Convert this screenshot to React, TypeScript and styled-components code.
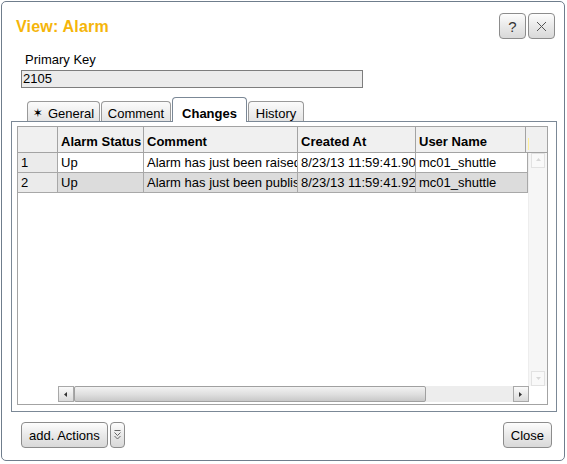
import React from "react";
import styled, { createGlobalStyle, css } from "styled-components";

const Global = createGlobalStyle`
  html, body { margin: 0; padding: 0; background: #fff; }
  body {
    font-family: "Liberation Sans", Arial, Helvetica, sans-serif;
    font-size: 13px;
    color: #000;
  }
`;

const Dialog = styled.div`
  margin: 1px;
  width: 564px;
  height: 460px;
  box-sizing: border-box;
  border: 1px solid #6f7d8c;
  border-radius: 5px;
  background: #fff;
  display: flex;
  flex-direction: column;
`;

const TitleBar = styled.div`
  display: flex;
  align-items: center;
  justify-content: space-between;
  height: 26px;
  padding: 11px 9px 0 14px;
`;

const Title = styled.div`
  font-size: 16px;
  font-weight: bold;
  color: #f5b50a;
  line-height: 18px;
  padding-top: 1px;
  letter-spacing: 0.2px;
`;

const TitleButtons = styled.div`
  display: flex;
  gap: 2px;
`;

const buttonSkin = css`
  box-sizing: border-box;
  height: 26px;
  border: 1px solid #8c8c8c;
  border-radius: 4px;
  background: linear-gradient(#fdfdfd, #e9e9e9 50%, #d9d9d9);
  font-family: inherit;
  font-size: 13px;
  color: #000;
  display: flex;
  align-items: center;
  justify-content: center;
  padding: 0;
`;

const IconButton = styled.div`
  ${buttonSkin};
  width: 27px;
  font-size: 15px;
  color: #333;
`;

const Field = styled.div`
  margin-top: 13px;
  padding-left: 19px;
  display: flex;
  flex-direction: column;
`;

const FieldLabel = styled.div`
  padding-left: 4px;
  line-height: 15px;
`;

const FieldValue = styled.div`
  margin-top: 3px;
  width: 342px;
  height: 18px;
  box-sizing: border-box;
  border: 1px solid #7d7d7d;
  background: #ebebeb;
  padding-left: 1px;
  line-height: 16px;
`;

const TabRow = styled.div`
  margin-top: 9px;
  height: 24px;
  padding-left: 25px;
  display: flex;
  align-items: flex-end;
  gap: 1px;
  position: relative;
  z-index: 1;
`;

const Tab = styled.div<{ $active?: boolean; $w: number }>`
  width: ${(p) => p.$w}px;
  box-sizing: border-box;
  border: 1px solid #999;
  border-bottom: none;
  border-radius: 4px 4px 0 0;
  text-align: center;
  line-height: 15px;
  white-space: nowrap;
  ${(p) =>
    p.$active
      ? css`
          height: 25px;
          margin-bottom: -1px;
          padding-top: 8px;
          background: #fff;
          border-color: #7b8896;
          font-weight: bold;
        `
      : css`
          height: 20px;
          padding-top: 4px;
          background: linear-gradient(#fbfbfb, #e4e4e4);
        `}
`;

const Star = styled.span`
  font-family: "DejaVu Sans", sans-serif;
  font-size: 12px;
  font-weight: bold;
  margin-right: 5px;
  position: relative;
  top: -1px;
`;

const Panel = styled.div`
  flex: 1;
  margin: 0 7px 0 9px;
  border: 1px solid #7b8896;
  padding: 4px 8px 6px 5px;
  display: flex;
`;

const Grid = styled.div`
  flex: 1;
  border: 1px solid #a3a3a3;
  background: #fff;
  display: flex;
  flex-direction: column;
`;

const GridHeader = styled.div`
  display: flex;
  height: 26px;
  box-sizing: border-box;
  border-bottom: 1px solid #a3a3a3;
  background: #f0f0f0;
`;

const HeaderCell = styled.div<{ $w: number }>`
  width: ${(p) => p.$w}px;
  flex: none;
  box-sizing: border-box;
  border-right: 1px solid #a3a3a3;
  padding: 7px 3px 0;
  font-weight: bold;
  line-height: 15px;
  white-space: nowrap;
  overflow: hidden;
`;

const HeaderFiller = styled.div`
  flex: 1;
  display: flex;
  align-items: flex-end;
  padding: 0 0 2px 2px;
`;

const ResizeMark = styled.div`
  width: 1px;
  height: 12px;
  background: #fff09a;
`;

const GridBody = styled.div`
  flex: 1;
  display: flex;
  min-height: 0;
`;

const Rows = styled.div`
  flex: 1;
  display: flex;
  flex-direction: column;
`;

const DataRow = styled.div<{ $shade?: boolean }>`
  display: flex;
  height: 20px;
  box-sizing: border-box;
  border-bottom: 1px solid #a8a8a8;
  background: ${(p) => (p.$shade ? "#dcdcdc" : "#fff")};
`;

const Cell = styled.div<{ $w: number; $num?: boolean }>`
  width: ${(p) => p.$w}px;
  flex: none;
  box-sizing: border-box;
  border-right: 1px solid #a8a8a8;
  padding: 0 3px;
  line-height: 19px;
  white-space: nowrap;
  overflow: hidden;
  ${(p) => p.$num && "background: #ebebeb;"}
`;

const VScroll = styled.div`
  width: 19px;
  box-sizing: border-box;
  padding: 0 2px 0 2px;
  background: #f6f6f6;
  border-left: 1px solid #ededed;
  display: flex;
  flex-direction: column;
  justify-content: space-between;
`;

const GhostArrow = styled.div`
  height: 15px;
  box-sizing: border-box;
  border: 1px solid #e2e2e2;
  background: #f9f9f9;
  display: flex;
  align-items: center;
  justify-content: center;
`;

const HScrollRow = styled.div`
  height: 18px;
  display: flex;
`;

const HSpacer = styled.div<{ $w: number }>`
  width: ${(p) => p.$w}px;
  flex: none;
`;

const HScroll = styled.div`
  flex: 1;
  height: 16px;
  background: #ededed;
  display: flex;
  align-items: stretch;
`;

const ArrowButton = styled.div`
  width: 16px;
  flex: none;
  box-sizing: border-box;
  border: 1px solid #a8a8a8;
  background: linear-gradient(#fafafa, #dadada);
  display: flex;
  align-items: center;
  justify-content: center;
`;

const Thumb = styled.div<{ $w: number }>`
  width: ${(p) => p.$w}px;
  flex: none;
  box-sizing: border-box;
  border: 1px solid #a0a0a0;
  border-radius: 2px;
  background: linear-gradient(#f2f2f2, #e0e0e0 50%, #c8c8c8);
`;

const Track = styled.div`
  flex: 1;
`;

const Footer = styled.div`
  display: flex;
  align-items: center;
  justify-content: space-between;
  padding: 10px 12px 12px 19px;
`;

const ButtonGroup = styled.div`
  display: flex;
  gap: 2px;
`;

const TextButton = styled.div`
  ${buttonSkin};
  padding: 0 7px;
`;

const MenuButton = styled.div`
  ${buttonSkin};
  width: 15px;
`;

const columns = [40, 86, 154, 118];

const rows = [
  {
    n: "1",
    status: "Up",
    comment: "Alarm has just been raised",
    created: "8/23/13 11:59:41.90",
    user: "mc01_shuttle",
  },
  {
    n: "2",
    status: "Up",
    comment: "Alarm has just been published",
    created: "8/23/13 11:59:41.92",
    user: "mc01_shuttle",
  },
];

const CloseIcon = () => (
  <svg width="11" height="11" viewBox="0 0 11 11">
    <path d="M1 1 L10 10 M10 1 L1 10" stroke="#555" strokeWidth="1" fill="none" />
  </svg>
);

const MoreIcon = () => (
  <svg width="7" height="11" viewBox="0 0 7 11">
    <path d="M0.5 0.5 H6.5 M0.5 2.5 L3.5 5.5 L6.5 2.5 M0.5 6 L3.5 9 L6.5 6" stroke="#666" strokeWidth="1" fill="none" />
  </svg>
);

const Tri = ({ dir, color }: { dir: "left" | "right" | "up" | "down"; color: string }) => {
  const d =
    dir === "left"
      ? "M1 3.5 L4 1 L4 6 Z"
      : dir === "right"
      ? "M4 3.5 L1 1 L1 6 Z"
      : dir === "up"
      ? "M3.5 1 L1 4 L6 4 Z"
      : "M3.5 5 L1 2 L6 2 Z";
  return (
    <svg width="7" height="7" viewBox="0 0 7 7">
      <path d={d} fill={color} />
    </svg>
  );
};

export default function App() {
  return (
    <>
      <Global />
      <Dialog>
        <TitleBar>
          <Title>View: Alarm</Title>
          <TitleButtons>
            <IconButton>?</IconButton>
            <IconButton>
              <CloseIcon />
            </IconButton>
          </TitleButtons>
        </TitleBar>

        <Field>
          <FieldLabel>Primary Key</FieldLabel>
          <FieldValue>2105</FieldValue>
        </Field>

        <TabRow>
          <Tab $w={73}>
            <Star>✶</Star>General
          </Tab>
          <Tab $w={70}>Comment</Tab>
          <Tab $w={75} $active>
            Changes
          </Tab>
          <Tab $w={56}>History</Tab>
        </TabRow>

        <Panel>
          <Grid>
            <GridHeader>
              <HeaderCell $w={columns[0]} />
              <HeaderCell $w={columns[1]}>Alarm Status</HeaderCell>
              <HeaderCell $w={columns[2]}>Comment</HeaderCell>
              <HeaderCell $w={columns[3]}>Created At</HeaderCell>
              <HeaderCell $w={110}>User Name</HeaderCell>
              <HeaderFiller>
                <ResizeMark />
              </HeaderFiller>
            </GridHeader>
            <GridBody>
              <Rows>
                {rows.map((r, i) => (
                  <DataRow key={r.n} $shade={i === 1}>
                    <Cell $w={columns[0]} $num>
                      {r.n}
                    </Cell>
                    <Cell $w={columns[1]}>{r.status}</Cell>
                    <Cell $w={columns[2]}>{r.comment}</Cell>
                    <Cell $w={columns[3]}>{r.created}</Cell>
                    <Cell $w={112}>{r.user}</Cell>
                  </DataRow>
                ))}
              </Rows>
              <VScroll>
                <GhostArrow>
                  <Tri dir="up" color="#d8d8d8" />
                </GhostArrow>
                <GhostArrow>
                  <Tri dir="down" color="#d8d8d8" />
                </GhostArrow>
              </VScroll>
            </GridBody>
            <HScrollRow>
              <HSpacer $w={40} />
              <HScroll>
                <ArrowButton>
                  <Tri dir="left" color="#333" />
                </ArrowButton>
                <Thumb $w={352} />
                <Track />
                <ArrowButton>
                  <Tri dir="right" color="#333" />
                </ArrowButton>
              </HScroll>
              <HSpacer $w={18} />
            </HScrollRow>
          </Grid>
        </Panel>

        <Footer>
          <ButtonGroup>
            <TextButton>add. Actions</TextButton>
            <MenuButton>
              <MoreIcon />
            </MenuButton>
          </ButtonGroup>
          <TextButton>Close</TextButton>
        </Footer>
      </Dialog>
    </>
  );
}
